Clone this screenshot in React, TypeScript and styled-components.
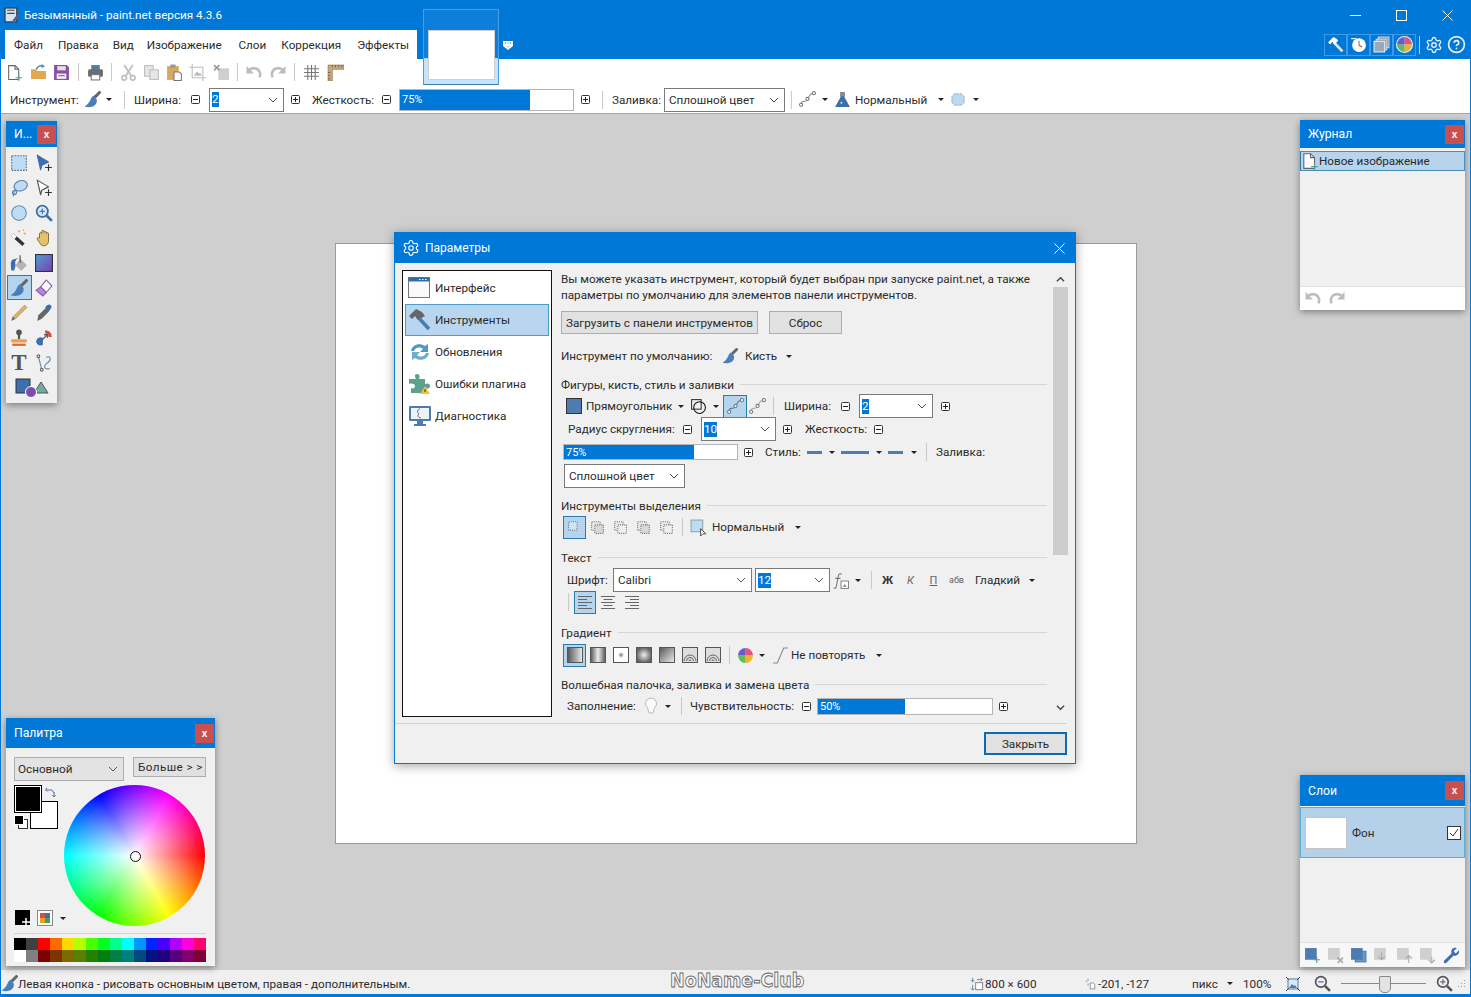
import type { ReactNode } from 'react'
import styled, { createGlobalStyle } from 'styled-components'
import { Settings, CircleHelp } from 'lucide-react'

const BLUE = '#0078d7'
const ICON = '#4f7cb0'
const DIS = '#bdbdbd'

const GlobalStyle = createGlobalStyle`
  html, body { margin: 0; padding: 0; background: #cfcfcf; }
  * { box-sizing: border-box; }
`

const Frame = styled.div`
  position: relative;
  width: 1471px;
  height: 997px;
  display: flex;
  flex-direction: column;
  overflow: hidden;
  border-left: 1px solid ${BLUE};
  border-right: 1px solid ${BLUE};
  border-bottom: 3px solid ${BLUE};
  font: 11.7px Roboto, "Noto Sans", sans-serif;
  color: #2b2b2b;
`

const TitleBar = styled.div`
  height: 30px;
  flex: none;
  display: flex;
  align-items: center;
  padding-left: 3px;
  background: ${BLUE};
  color: #fff;
`

const TitleText = styled.span`
  margin-left: 3px;
`

const WinButtons = styled.div`
  margin-left: auto;
  display: flex;
`

const WinBtn = styled.span`
  width: 46px;
  height: 30px;
  display: flex;
  align-items: center;
  justify-content: center;
`

const MenuRow = styled.div`
  height: 29px;
  flex: none;
  display: flex;
  align-items: stretch;
  padding: 0 2px 0 4px;
  background: ${BLUE};
`

const MenuTab = styled.div`
  width: 412px;
  display: flex;
  align-items: center;
  background: #fff;
  padding: 1px 0 0 9px;
`

const MenuItem = styled.span<{ $w: number }>`
  width: ${(p) => p.$w}px;
  white-space: nowrap;
`

const MenuRight = styled.div`
  margin-left: auto;
  display: flex;
  align-items: center;
`

const RightTool = styled.span<{ $on?: boolean }>`
  width: 23px;
  height: 22px;
  display: flex;
  align-items: center;
  justify-content: center;
  border: 1px solid ${(p) => (p.$on ? '#3c9ae6' : 'transparent')};
`

const IconRow = styled.div`
  height: 26px;
  flex: none;
  display: flex;
  align-items: center;
  padding-left: 1px;
  background: #fff;
`

const ToolRow = styled.div`
  height: 29px;
  flex: none;
  display: flex;
  align-items: center;
  padding: 1px 0 0 9px;
  background: #fff;
  border-bottom: 1px solid #a6a6a6;
`

const Slot = styled.span<{ $w: number; $ml?: number }>`
  width: ${(p) => p.$w}px;
  margin-left: ${(p) => p.$ml ?? 0}px;
  flex: none;
  display: flex;
  align-items: center;
  justify-content: center;
`

const Label = styled.span<{ $w: number; $ml?: number }>`
  width: ${(p) => p.$w}px;
  margin-left: ${(p) => p.$ml ?? 0}px;
  flex: none;
  white-space: nowrap;
`

const Caret = styled.span<{ $w: number }>`
  width: ${(p) => p.$w}px;
  flex: none;
  display: flex;
  justify-content: center;
  &::after {
    content: '';
    border-left: 3px solid transparent;
    border-right: 3px solid transparent;
    border-top: 3px solid #222;
  }
`

const Sep = styled.span<{ $w: number; $ml?: number }>`
  width: ${(p) => p.$w}px;
  height: 18px;
  margin-left: ${(p) => p.$ml ?? 0}px;
  flex: none;
  display: flex;
  justify-content: center;
  &::after {
    content: '';
    width: 1px;
    background: #c9c9c9;
  }
`

const Combo = styled.span<{ $w: number; $h?: number; $ml?: number }>`
  width: ${(p) => p.$w}px;
  height: ${(p) => p.$h ?? 24}px;
  margin-left: ${(p) => p.$ml ?? 0}px;
  flex: none;
  display: flex;
  align-items: center;
  justify-content: space-between;
  padding: 0 5px 0 4px;
  background: #fff;
  border: 1px solid #7a7a7a;
`

const Picked = styled.span`
  background: ${BLUE};
  color: #fff;
  line-height: 15px;
  margin-left: -2px;
`

const Track = styled.span<{ $w: number; $h?: number; $ml?: number }>`
  position: relative;
  width: ${(p) => p.$w}px;
  height: ${(p) => p.$h ?? 22}px;
  margin-left: ${(p) => p.$ml ?? 0}px;
  flex: none;
  display: flex;
  background: #fff;
  border: 1px solid #b5b5b5;
`

const Fill = styled.span`
  background: ${BLUE};
  color: #fff;
  padding-left: 2px;
  font-size: 11px;
  display: flex;
  align-items: center;
`

const Workspace = styled.div`
  position: relative;
  flex: 1;
  display: flex;
  align-items: center;
  justify-content: center;
  padding-top: 2px;
  background: #cfcfcf;
`

const Canvas = styled.div`
  width: 802px;
  height: 601px;
  background: #fff;
  border: 1px solid #9a9a9a;
`

const Thumb = styled.div`
  position: absolute;
  left: 422px;
  top: 9px;
  width: 76px;
  height: 76px;
  padding: 20px 3px 4px 4px;
  background: linear-gradient(rgba(255, 255, 255, 0.05) 65%, rgba(190, 225, 250, 0.9) 65%);
  border: 1px solid #4b9ce0;
  border-bottom-color: #3b7ea8;
`

const ThumbPage = styled.div`
  height: 100%;
  background: #fff;
  border: 1px solid #cfcfcf;
`

const Panel = styled.div<{ $x: number; $y: number; $w: number; $h: number }>`
  position: absolute;
  left: ${(p) => p.$x}px;
  top: ${(p) => p.$y}px;
  width: ${(p) => p.$w}px;
  height: ${(p) => p.$h}px;
  display: flex;
  flex-direction: column;
  background: #f0f0f0;
  box-shadow: 0 2px 7px rgba(0, 0, 0, 0.4);
`

const PanelHead = styled.div<{ $h: number }>`
  height: ${(p) => p.$h}px;
  flex: none;
  display: flex;
  align-items: center;
  justify-content: space-between;
  padding: 0 1px 0 8px;
  background: ${BLUE};
  color: #fff;
  font-size: 12.2px;
`

const CloseX = styled.span`
  width: 19px;
  height: 19px;
  display: flex;
  align-items: center;
  justify-content: center;
  background: #c75050;
  color: #fff;
  font: bold 10px "Liberation Sans", sans-serif;
`

const ToolGrid = styled.div`
  display: grid;
  grid-template-columns: 25px 25px;
  grid-auto-rows: 25px;
  padding: 3px 0 0 0;
  justify-content: center;
`

const ToolCell = styled.span<{ $on?: boolean }>`
  display: flex;
  align-items: center;
  justify-content: center;
  background: ${(p) => (p.$on ? '#b5d4ee' : 'transparent')};
  border: 1px solid ${(p) => (p.$on ? '#2a7ca8' : 'transparent')};
  svg {
    width: 18px;
    height: 18px;
  }
`

const TypeT = styled.span`
  font: bold 23px "Liberation Serif", serif;
  color: #555;
  line-height: 22px;
`

const ShapesCell = styled.span`
  grid-column: 1 / 3;
  display: flex;
  align-items: center;
  justify-content: center;
`

const HistRow = styled.div`
  height: 20px;
  margin-top: 3px;
  display: flex;
  align-items: center;
  background: #b8d4ec;
  border: 1px solid #3f8fb8;
  border-left-color: #2a7ca8;
`

const PanelFill = styled.div`
  flex: 1;
`

const PanelFoot = styled.div<{ $h: number; $bg: string; $pl: number }>`
  height: ${(p) => p.$h}px;
  flex: none;
  display: flex;
  align-items: center;
  padding-left: ${(p) => p.$pl}px;
  background: ${(p) => p.$bg};
  border-top: 1px solid #e2e2e2;
`

const LayerRow = styled.div`
  height: 51px;
  margin-top: 1px;
  display: flex;
  align-items: center;
  padding: 0 3px 0 4px;
  background: #b4d1e9;
  border: 1px solid #56b0d8;
`

const LayerThumb = styled.span`
  width: 42px;
  height: 32px;
  background: #fff;
  border: 1px solid #c5c5c5;
`

const LayerName = styled.span`
  margin-left: 5px;
  flex: 1;
`

const CheckBox = styled.span`
  width: 14px;
  height: 14px;
  display: flex;
  align-items: center;
  justify-content: center;
  background: #fff;
  border: 1px solid #333;
`

const PaletteBody = styled.div`
  flex: 1;
  display: flex;
  flex-direction: column;
  padding: 9px 9px 4px 8px;
`

const PaletteTop = styled.div`
  display: flex;
  align-items: flex-start;
`

const PaletteCombo = styled.span`
  width: 110px;
  height: 24px;
  display: flex;
  align-items: center;
  justify-content: space-between;
  padding: 0 5px 0 3px;
  background: #e3e3e3;
  border: 1px solid #adadad;
`

const MoreBtn = styled.span`
  width: 73px;
  height: 20px;
  margin-left: 9px;
  display: flex;
  align-items: center;
  padding-left: 4px;
  background: #e1e1e1;
  border: 1px solid #adadad;
  letter-spacing: 0.4px;
`

const PaletteMid = styled.div`
  display: flex;
  margin-top: 4px;
`

const SwatchCol = styled.div`
  position: relative;
  width: 50px;
  height: 141px;
`

const MainColor = styled.span<{ $bg: string; $x: number; $y: number }>`
  position: absolute;
  left: ${(p) => p.$x}px;
  top: ${(p) => p.$y}px;
  width: 26px;
  height: 26px;
  background: ${(p) => p.$bg};
  outline: 1px solid #000;
  border: 1px solid #fff;
`

const SwapIcon = styled.span`
  position: absolute;
  left: 31px;
  top: 2px;
`

const ResetIcon = styled.span`
  position: absolute;
  left: 0;
  top: 30px;
`

const PaletteIcons = styled.div`
  position: absolute;
  left: 1px;
  bottom: 0;
  display: flex;
  align-items: center;
`

const Wheel = styled.div`
  position: relative;
  width: 141px;
  height: 141px;
  border-radius: 50%;
  background: radial-gradient(circle, #fff 0, rgba(255, 255, 255, 0) 70%),
    conic-gradient(from 90deg, #f00, #ff0, #0f0, #0ff, #00f, #f0f, #f00);
  &::after {
    content: '';
    position: absolute;
    left: 66px;
    top: 66px;
    width: 9px;
    height: 9px;
    border-radius: 50%;
    border: 1.5px solid #111;
    background: rgba(255, 255, 255, 0.6);
  }
`

const PaletteRule = styled.div`
  height: 1px;
  margin-top: 7px;
  background: #d4d4d4;
`

const Strip = styled.div`
  display: grid;
  grid-template-columns: repeat(16, 12px);
  grid-auto-rows: 12px;
  margin-top: 4px;
`

const StatusBar = styled.div`
  height: 24px;
  flex: none;
  display: flex;
  align-items: center;
  padding-top: 3px;
  background: #f0f0f0;
`

const Watermark = styled.span`
  width: 300px;
  flex: none;
  font: bold 17.5px "DejaVu Sans", sans-serif;
  margin-top: -7px;
  color: #f7f7f7;
  -webkit-text-stroke: 0.8px #666;
  transform: scaleY(1.15);
`

const ZoomTrack = styled.span`
  position: relative;
  width: 85px;
  height: 1px;
  margin-left: 10px;
  flex: none;
  background: #8a8a8a;
  &::after {
    content: '';
    position: absolute;
    left: 38px;
    top: -7px;
    width: 10px;
    height: 15px;
    background: #e3e3e3;
    border: 1px solid #8a8a8a;
    border-radius: 1px 1px 5px 5px;
  }
`

const Dialog = styled.div`
  position: absolute;
  left: 393px;
  top: 118px;
  width: 682px;
  height: 532px;
  display: flex;
  flex-direction: column;
  background: #f0f0f0;
  border: 1px solid ${BLUE};
  box-shadow: 0 2px 10px rgba(0, 0, 0, 0.35);
`

const DialogHead = styled.div`
  height: 30px;
  flex: none;
  display: flex;
  align-items: center;
  padding-left: 7px;
  background: ${BLUE};
  color: #fff;
  gap: 5px;
  font-size: 12px;
`

const DialogClose = styled.span`
  margin-left: auto;
  width: 32px;
  display: flex;
  justify-content: center;
`

const DialogMain = styled.div`
  flex: 1;
  display: flex;
  padding: 7px 7px 0 7px;
`

const SideList = styled.div`
  width: 150px;
  height: 447px;
  flex: none;
  padding: 1px 2px;
  background: #fff;
  border: 1px solid #111;
`

const SideItem = styled.div<{ $on?: boolean }>`
  height: 32px;
  display: flex;
  align-items: center;
  gap: 3px;
  padding: 0 0 1px 2px;
  background: ${(p) => (p.$on ? '#b8d6f0' : 'transparent')};
  border: 1px solid ${(p) => (p.$on ? '#4e9cc4' : 'transparent')};
`

const Content = styled.div`
  width: 486px;
  margin-left: 9px;
  flex: none;
`

const Desc = styled.div`
  line-height: 16px;
  height: 33px;
  padding-top: 1px;
  white-space: nowrap;
`

const Row = styled.div<{ $h: number; $mt?: number }>`
  height: ${(p) => p.$h}px;
  margin-top: ${(p) => p.$mt ?? 0}px;
  display: flex;
  align-items: center;
  white-space: nowrap;
`

const PlainBtn = styled.span<{ $w: number; $ml?: number }>`
  width: ${(p) => p.$w}px;
  height: 23px;
  margin-left: ${(p) => p.$ml ?? 0}px;
  display: flex;
  align-items: center;
  justify-content: center;
  background: #e1e1e1;
  border: 1px solid #adadad;
`

const Section = styled.div<{ $mt: number }>`
  height: 16px;
  margin-top: ${(p) => p.$mt}px;
  display: flex;
  align-items: center;
  gap: 6px;
  white-space: nowrap;
  &::after {
    content: '';
    flex: 1;
    height: 1px;
    margin-top: -2px;
    background: #d6d6d6;
  }
`

const PickBtn = styled.span<{ $w?: number; $ml?: number }>`
  width: ${(p) => p.$w ?? 23}px;
  height: 23px;
  margin-left: ${(p) => p.$ml ?? 0}px;
  flex: none;
  display: flex;
  align-items: center;
  justify-content: center;
  background: #b5d4ee;
  border: 1px solid #2a7ca8;
`

const Dash = styled.span<{ $w: number }>`
  width: ${(p) => p.$w}px;
  height: 3px;
  flex: none;
  background: #4f7cb0;
`

const FontMark = styled.span<{ $b?: boolean; $i?: boolean; $u?: boolean; $small?: boolean }>`
  width: 23px;
  flex: none;
  text-align: center;
  font-size: ${(p) => (p.$small ? 9 : 11)}px;
  font-weight: ${(p) => (p.$b ? 700 : 400)};
  font-style: ${(p) => (p.$i ? 'italic' : 'normal')};
  text-decoration: ${(p) => (p.$u ? 'underline' : 'none')};
  color: ${(p) => (p.$b ? '#333' : '#666')};
`

const ScrollBar = styled.div`
  width: 15px;
  height: 447px;
  margin-left: 6px;
  flex: none;
  display: flex;
  flex-direction: column;
  align-items: center;
  justify-content: space-between;
  padding: 5px 0;
  background: linear-gradient(#f0f0f0 17px, #cdcdcd 17px, #cdcdcd 285px, #f0f0f0 285px);
`

const DialogFoot = styled.div`
  height: 40px;
  margin: 0 8px 0 0;
  flex: none;
  display: flex;
  justify-content: flex-end;
  padding: 8px 0 0;
  border-top: 1px solid #d4d4d4;
`

const CloseBtn = styled.span`
  width: 83px;
  height: 23px;
  display: flex;
  align-items: center;
  justify-content: center;
  background: #e1e1e1;
  border: 2px solid #0a6cb0;
`

// ---- icons ----

function Svg({ s = 17, vb = 16, children }: { s?: number; vb?: number; children: ReactNode }) {
  return (
    <svg width={s} height={s} viewBox={`0 0 ${vb} ${vb}`} fill="none">
      {children}
    </svg>
  )
}

const Box = ({ plus }: { plus?: boolean }) => (
  <Svg s={9} vb={9}>
    <rect x=".5" y=".5" width="8" height="8" rx="1" stroke="#333" fill="#fff" />
    <path d="M2 4.5h5" stroke="#222" />
    {plus && <path d="M4.5 2v5" stroke="#222" />}
  </Svg>
)

const Chev = () => (
  <Svg s={10} vb={10}>
    <path d="M1 3l4 4 4-4" stroke="#555" />
  </Svg>
)

const Brush = ({ s = 17 }: { s?: number }) => (
  <Svg s={s}>
    <path d="M15.500 .5L10 6" stroke="#666" strokeWidth="2.800" />
    <path d="M9 4.500C5.500 6 7 11 .5 14.500c6 2 12.500-.5 11.500-6.500z" fill="#4a7dbb" />
  </Svg>
)

const NewDoc = ({ s = 17 }: { s?: number }) => (
  <Svg s={s}>
    <path d="M2.5 1.5h6l3.5 3.5v9.5h-9.5z" fill="#fff" stroke="#666" />
    <path d="M8.5 1.5v3.5H12" stroke="#666" />
    <path d="M12 10v6M9 13h6" stroke="#5c9c88" />
  </Svg>
)

const Folder = () => (
  <Svg>
    <path d="M1 5h5l1 1.500h8V14H1z" fill="#e0a850" />
    <path d="M6 5c1-3 4-4 6-3" stroke="#3f8fa0" strokeWidth="1.5" />
    <path d="M11 0l3 2-3 2z" fill="#3f8fa0" />
  </Svg>
)

const Floppy = () => (
  <Svg>
    <path d="M1 1h12l2 2v12H1z" fill="#8a4f9e" />
    <rect x="4" y="2" width="8" height="4" fill="#e8dcef" />
    <rect x="3.500" y="9" width="9" height="5" fill="#f2edf5" />
    <path d="M5 11h6" stroke="#8a4f9e" />
  </Svg>
)

const Printer = () => (
  <Svg>
    <rect x="4" y="1" width="8" height="5" fill="#4f7cb0" />
    <rect x="1" y="5" width="14" height="7" rx="1.500" fill="#6d6d6d" />
    <rect x="4" y="10" width="8" height="5" fill="#fff" stroke="#777" />
  </Svg>
)

const Scissors = () => (
  <Svg>
    <path d="M4 1l6.500 10M12 1L5.500 11" stroke={DIS} strokeWidth="1.600" />
    <circle cx="4" cy="13" r="2.200" stroke={DIS} strokeWidth="1.500" />
    <circle cx="12" cy="13" r="2.200" stroke={DIS} strokeWidth="1.500" />
  </Svg>
)

const CopyIco = () => (
  <Svg>
    <rect x="1.500" y="1.500" width="8" height="10" fill="#e6e6e6" stroke={DIS} />
    <rect x="6.500" y="5.500" width="8" height="9" fill="#e6e6e6" stroke={DIS} />
  </Svg>
)

const PasteIco = () => (
  <Svg>
    <rect x="1" y="2" width="11" height="13" fill="#d9a860" />
    <rect x="4" y="0.500" width="5" height="3" fill="#999" />
    <path d="M7.500 7.500h5l2 2v6h-7z" fill="#fff" stroke="#777" />
  </Svg>
)

const CropIco = () => (
  <Svg>
    <path d="M3 0v13h13M0 3h13v13" stroke={DIS} />
    <path d="M5 10l2.500-3 2 2 1-1 1.500 3H5z" fill={DIS} />
  </Svg>
)

const DeselIco = () => (
  <Svg>
    <rect x="5" y="4" width="10" height="11" fill="#cfcfcf" />
    <path d="M1 1l5 5M6 1L1 6" stroke="#999" strokeWidth="1.500" />
  </Svg>
)

const Undo = ({ flip }: { flip?: boolean }) => (
  <svg width="18" height="15" viewBox="0 0 16 14" fill="none" transform={flip ? 'scale(-1,1)' : undefined}>
    <path d="M3 5c3-3 9-3 10.500 2 .5 1.500.3 3-.5 4.500" stroke={DIS} strokeWidth="2.400" />
    <path d="M1 1v7h7z" fill={DIS} />
  </svg>
)

const GridIco = () => (
  <Svg>
    <path d="M4.500 1v14M8 1v14M11.500 1v14M1 4.500h14M1 8h14M1 11.500h14" stroke="#777" />
  </Svg>
)

const Ruler = () => (
  <Svg>
    <path d="M1 1h15v4H5v11H1z" fill="#c9a877" stroke="#8a7350" strokeWidth=".6" />
    <path d="M5 1v2M8 1v2M11 1v2M14 1v2M1 8h2M1 11h2M1 14h2" stroke="#6b5a3e" strokeWidth=".8" />
  </Svg>
)

const Hammer = ({ c = '#6e6e6e', h = '#4f7cb0' }: { c?: string; h?: string }) => (
  <Svg>
    <path d="M6.500 6l8 8.500" stroke={h} strokeWidth="2.600" />
    <path d="M1 6l5-5 3 1.500 1.500 2L7 8 5 5.500 3 8z" fill={c} />
  </Svg>
)

const ClockIco = () => (
  <Svg>
    <circle cx="8.500" cy="8.500" r="6.500" fill="#fff" />
    <path d="M8.500 4.500v4.300l3 1.500" stroke="#777" />
    <path d="M1 2h5v1H1z" fill="#fff" />
  </Svg>
)

const LayersIco = () => (
  <Svg>
    <rect x="5" y="1" width="10" height="10" fill="#7b8ea3" stroke="#d5dde6" />
    <rect x="3" y="3" width="10" height="10" fill="#8b9db0" stroke="#d5dde6" />
    <rect x="1" y="5" width="10" height="10" fill="#9baabb" stroke="#e8edf2" />
  </Svg>
)

const ColorDisc = ({ s = 17 }: { s?: number }) => (
  <svg width={s} height={s} viewBox="-8 -8 16 16">
    <circle r="8" fill="#eee" />
    <path d="M0 0L0-7A7 7 0 0 1 7 0z" fill="#e2557a" />
    <path d="M0 0L7 0A7 7 0 0 1 0 7z" fill="#f0b030" />
    <path d="M0 0L0 7A7 7 0 0 1-7 0z" fill="#66bb55" />
    <path d="M0 0L-7 0A7 7 0 0 1 0-7z" fill="#6a5acd" />
  </svg>
)

const Shield = () => (
  <svg width="10" height="10" viewBox="0 0 10 10">
    <path d="M0 1h10v5L5 10 0 6z" fill="#fff" />
    <path d="M2 3h1M4.500 3h1M7 3h1" stroke={BLUE} />
    <path d="M3 6h4L5 8z" fill="#bcd8f0" />
  </svg>
)

const CurveIco = ({ c = '#7a9cc4' }: { c?: string }) => (
  <Svg>
    <path d="M2 13c0-6 4-1 6-5s3-6 6-6" stroke={c} />
    <circle cx="2" cy="13" r="1.500" fill="#fff" stroke="#777" />
    <circle cx="8" cy="7.500" r="1.500" fill="#fff" stroke="#777" />
    <circle cx="14" cy="2" r="1.500" fill="#fff" stroke="#777" />
  </Svg>
)

const Flask = () => (
  <Svg>
    <path d="M6 1h4v5l5 9H1l5-9z" fill="#3d6fa8" />
    <path d="M6 1h4v4H6z" fill="#8a8a8a" />
    <circle cx="7" cy="11" r="1" fill="#bfe0f5" />
  </Svg>
)

const Blob = () => (
  <Svg>
    <path d="M4 1.500h8l3 3v7l-3 3H4l-3-3v-7z" fill="#bcd9f3" stroke="#8a9fb5" strokeDasharray="2 1" />
  </Svg>
)

const SelRect = () => (
  <Svg>
    <rect x="1.500" y="1.500" width="13" height="13" fill="#bfdcf5" stroke="#5b6f85" strokeDasharray="1.500 1" />
  </Svg>
)

const SelMove = ({ solid }: { solid?: boolean }) => (
  <Svg>
    <path d="M2 1l10 6-6 3-1 4z" fill={solid ? '#3d6fb0' : '#fff'} stroke={solid ? '#3d6fb0' : '#555'} strokeLinejoin="round" />
    <path d="M12 9v6M9 12h6" stroke="#333" />
  </Svg>
)

const Lasso = () => (
  <Svg>
    <ellipse cx="9.500" cy="6" rx="6" ry="4.500" fill="#bfdcf5" stroke="#5b7fa5" transform="rotate(-20 9.500 6)" />
    <circle cx="4" cy="12" r="1.800" stroke="#5b7fa5" />
    <path d="M4 10c-1 2 0 4-1.500 5.500" stroke="#5b7fa5" />
  </Svg>
)

const Ellipse = () => (
  <Svg>
    <circle cx="8" cy="8" r="6.500" fill="#bfdcf5" stroke="#6d8fb0" />
  </Svg>
)

const Zoom = ({ c = '#3d6fa8', fill = '#dbe8f4', plus = true }: { c?: string; fill?: string; plus?: boolean }) => (
  <Svg>
    <circle cx="6.500" cy="6.500" r="5" fill={fill} stroke={c} strokeWidth="1.600" />
    <path d="M10.500 10.500l4.500 4.500" stroke={c} strokeWidth="2.400" />
    <path d="M4 6.500h5" stroke={c} />
    {plus && <path d="M6.500 4v5" stroke={c} />}
  </Svg>
)

const Wand = () => (
  <Svg>
    <path d="M2 5l10 9" stroke="#333" strokeWidth="3" />
    <path d="M2 5l3 2.700" stroke="#fff" strokeWidth="3" />
    <circle cx="8" cy="2" r="1" fill="#e0b050" />
    <circle cx="13" cy="4" r="1" fill="#e0b050" />
    <circle cx="12" cy="1" r=".7" fill="#e0b050" />
  </Svg>
)

const Hand = () => (
  <Svg>
    <path d="M4 8V4c0-1 2-1 2 0V2c0-1 2-1 2 0v1c0-1 2-1 2 0v1c0-1 2-1 2 0v7c0 2-2 4-4 4s-3-1-4-3L2 9c-.5-1 1-2 2-1z" fill="#e7c16b" stroke="#7a6330" strokeWidth=".8" />
  </Svg>
)

const Bucket = () => (
  <Svg>
    <path d="M9 4l6 6-5 5-5-5z" fill="#b5b5b5" />
    <path d="M9 1v7" stroke="#555" />
    <path d="M5 10C3 4 9 3 9 3L2 5c-2 2-1 6-1 9 0 1 3 1 3 0z" fill="#3d6fb0" />
  </Svg>
)

const GradBox = () => (
  <svg width="16" height="16" viewBox="0 0 16 16">
    <defs>
      <linearGradient id="tg" x1="0" y1="0" x2="1" y2="1">
        <stop offset="0" stopColor="#4fa0d8" />
        <stop offset="1" stopColor="#7a3fb0" />
      </linearGradient>
    </defs>
    <rect x=".5" y=".5" width="15" height="15" fill="url(#tg)" stroke="#333" />
  </svg>
)

const Eraser = () => (
  <Svg>
    <path d="M10 1l5 5-5 6-5-5z" fill="#fff" stroke="#8a5fb0" />
    <path d="M5 7l5 5-3 3-6-5z" fill="#b987d8" stroke="#8a5fb0" />
  </Svg>
)

const Pencil = () => (
  <Svg>
    <path d="M13 1l2 2L5 13l-3 1 1-3z" fill="#e0b468" stroke="#a8843f" strokeWidth=".6" />
    <path d="M1 15l1.500-4 2 2z" fill="#666" />
  </Svg>
)

const Picker = () => (
  <Svg>
    <path d="M10 3l3 3-7 7-4 2 1-5z" fill="#666" />
    <path d="M9 3c2-3 4-3 5-2s1 3-2 5z" fill="#3d6fb0" />
  </Svg>
)

const Stamp = () => (
  <Svg>
    <circle cx="8" cy="3" r="2.500" fill="#555" />
    <path d="M7 5h2v4H7z" fill="#555" />
    <rect x="1" y="9" width="14" height="3" rx="1" fill="#e8a048" />
    <rect x="2" y="13" width="12" height="2" fill="#d06a3a" />
  </Svg>
)

const Recolor = () => (
  <Svg>
    <path d="M1 11a4 4 0 0 1 6-3v6a4 4 0 0 1-6-3z" fill="#3d6fb0" />
    <path d="M9 1a6 6 0 0 1 6 6h-3a3 3 0 0 0-3-3z" fill="#d0503a" />
    <path d="M6 10l5-5M8 5h3v3" stroke="#555" />
  </Svg>
)

const LineTool = () => (
  <Svg>
    <path d="M3 2l3 12M10 3c4-2 5 2 1 5s-3 6 2 5" stroke="#6d8fb0" />
    <circle cx="3" cy="2" r="1.200" stroke="#666" fill="#fff" />
    <circle cx="6" cy="14" r="1.200" stroke="#666" fill="#fff" />
  </Svg>
)

const Shapes = () => (
  <svg width="34" height="20" viewBox="0 0 34 20">
    <rect x="1" y="1" width="14" height="14" fill="#3d6fb0" stroke="#333" />
    <path d="M26 4l7 11H19z" fill="#6fae9c" stroke="#555" />
    <circle cx="16" cy="14" r="5.500" fill="#7a4fb0" stroke="#fff" />
  </svg>
)

const RectMode = ({ n }: { n: number }) => (
  <Svg>
    <rect x="2.500" y="2.500" width="8" height="8" fill={n === 0 ? '#cfe4f7' : '#e8e8e8'} stroke="#777" strokeDasharray="1 1" />
    {n > 0 && <rect x="5.500" y="5.500" width="8" height="8" fill={n % 2 ? '#d8d8d8' : '#f0f0f0'} stroke="#777" strokeDasharray="1 1" />}
  </Svg>
)

const SelMode = () => (
  <Svg>
    <rect x="1" y="1" width="11" height="11" fill="#bfdcf5" stroke="#8aa" />
    <path d="M10 9v7l2-2 3 0z" fill="#fff" stroke="#333" strokeWidth=".8" />
  </Svg>
)

const Align = ({ kind }: { kind: 'l' | 'c' | 'r' }) => {
  const long = 'M1 2.500h14M1 8.500h14M1 14.500h14'
  const short = kind === 'l' ? 'M1 5.500h9M1 11.500h9' : kind === 'c' ? 'M3.500 5.500h9M3.500 11.500h9' : 'M6 5.500h9M6 11.500h9'
  return (
    <Svg s={16}>
      <path d={long} stroke="#666" />
      <path d={short} stroke="#666" />
    </Svg>
  )
}

const FontFx = () => (
  <Svg>
    <path d="M9 2C6 1 6 3 5.500 6L4 14c-.3 1.500-1.500 1.500-2.500 1M3 6h5" stroke="#777" />
    <rect x="8.500" y="8.500" width="7" height="7" stroke="#888" fill="#fff" />
    <path d="M10 14l2-3 2 3z" fill="#999" />
  </Svg>
)

const GradMode = ({ k }: { k: number }) => {
  const bgs = ['#999', '#bbb', '#fff', '#aaa', '#888', '#ddd', '#ddd']
  return (
    <svg width="16" height="16" viewBox="0 0 16 16">
      <defs>
        <linearGradient id={`g${k}`} x1="0" x2="1" y1="0" y2={k === 4 ? '1' : '0'}>
          <stop offset="0" stopColor="#555" />
          <stop offset={k === 1 ? '.5' : '1'} stopColor="#eee" />
          {k === 1 && <stop offset="1" stopColor="#555" />}
        </linearGradient>
        <radialGradient id={`r${k}`}>
          <stop offset="0" stopColor={k === 2 ? '#777' : '#eee'} />
          <stop offset={k === 2 ? '.4' : '1'} stopColor={k === 2 ? '#fff' : '#666'} />
        </radialGradient>
      </defs>
      <rect x=".5" y=".5" width="15" height="15" fill={k < 2 || k === 4 ? `url(#g${k})` : k < 4 ? `url(#r${k})` : bgs[k]} stroke="#555" />
      {k > 4 && <path d="M2 14a6 6 0 0 1 12 0M4.500 14a3.500 3.500 0 0 1 7 0M7 14a1 1 0 0 1 2 0" stroke="#666" fill="none" />}
    </svg>
  )
}

const Bulb = () => (
  <svg width="14" height="18" viewBox="0 0 14 18" fill="none">
    <path d="M7 1a5.500 5.500 0 0 1 3.500 9.800L9 16H5L3.500 10.800A5.500 5.500 0 0 1 7 1z" stroke="#bbb" fill="#fafafa" />
  </svg>
)

const WinIcon = () => (
  <Svg>
    <rect x="1" y="1" width="11" height="13" fill="#d8e4f0" stroke="#333" />
    <path d="M3 3h7M3 6h7" stroke="#444" />
    <path d="M7 14l6-8 2 2-6 7z" fill="#4f5f90" />
  </Svg>
)

const SideWindow = () => (
  <Svg s={24} vb={24}>
    <rect x=".5" y="1.500" width="21" height="20" fill="#fafafa" stroke="#777" />
    <rect x=".5" y="1.500" width="21" height="4" fill="#2f6fa8" />
    <path d="M14 3.500h1.500M17 3.500h1.500M11 3.500h1.500" stroke="#fff" />
  </Svg>
)

const SideHammer = () => (
  <Svg s={24} vb={24}>
    <path d="M9 8l12 13" stroke="#4f7cb0" strokeWidth="3.600" />
    <path d="M1 8l7-7 6 3 3 4-7 4-3-4-3 3z" fill="#666" />
  </Svg>
)

const SideUpdate = () => (
  <Svg s={24} vb={24}>
    <path d="M3 11C4 5 11 2 17 6l3-2v8h-8l3-3C11 6 7 8 6 11z" fill="#4f9ac0" />
    <path d="M21 13c-1 6-8 9-14 5l-3 2v-8h8l-3 3c4 3 8 1 9-2z" fill="#6faec8" />
  </Svg>
)

const SidePuzzle = () => (
  <Svg s={24} vb={24}>
    <path d="M9 2c3 0 3 3 2 5h6v5c2-1 5-1 5 2s-3 3-5 2v5H3v-5c2 1 4 0 4-2s-3-3-6-2V7h7C7 5 6 2 9 2z" fill="#5f9f8f" />
    <path d="M17 14l5 8H12z" fill="#f0c040" />
    <path d="M17 17v3" stroke="#333" />
  </Svg>
)

const SideDiag = () => (
  <Svg s={24} vb={24}>
    <rect x="1" y="2" width="22" height="15" rx="1" fill="#4f7cb0" />
    <rect x="3" y="4" width="18" height="11" fill="#eef3f8" />
    <path d="M12 5c-3 0-3 4-1 5-2 1-1 4 2 4" stroke="#667" />
    <path d="M9 17h6v3H9zM6 20h12v2H6z" fill="#4f7cb0" />
  </Svg>
)

const LayerBtn = ({ k }: { k: number }) => {
  const on = k === 0 || k === 2
  const c = on ? ICON : '#cfcfcf'
  return (
    <Svg>
      {k === 2 && <rect x="5" y="4" width="10" height="10" fill="#6d97c4" stroke={ICON} />}
      <rect x="1" y="1" width="11" height="11" fill={c} />
      {k === 0 && <path d="M12 9v6M9 12h6" stroke="#5c9c88" />}
      {k === 1 && <path d="M10 10l5 5M15 10l-5 5" stroke="#aaa" strokeWidth="1.500" />}
      {k === 3 && <path d="M8 5v7M5 9l3 3 3-3" stroke="#aaa" />}
      {k === 4 && <path d="M12 15V9M9 11l3-3 3 3" stroke="#aaa" />}
      {k === 5 && <path d="M12 9v6M9 12l3 3 3-3" stroke="#aaa" />}
    </Svg>
  )
}

const Wrench = () => (
  <Svg>
    <path d="M15 3l-3 3-2-2 3-3c-3-1-6 1-5 5L1 13c-1 2 1 3 2 2l7-7c3 1 6-2 5-5z" fill="#3d6fb0" />
  </Svg>
)

const SizeIco = () => (
  <Svg s={16}>
    <rect x="6.500" y="6.500" width="8" height="8" stroke="#777" fill="#fff" />
    <path d="M3 1v5M1 3.500l2 2 2-2M3 9v6M1 13l2 2 2-2M8 3h6M12 1l2 2-2 2" stroke="#5a7ea6" />
  </Svg>
)

const CursorIco = () => (
  <Svg s={16}>
    <path d="M7 6.500h4l2 2v6H7z" stroke="#777" fill="#fff" />
    <path d="M4 1v3M4 7v3M1 4.500h2" stroke="#5a7ea6" />
  </Svg>
)

const FitIco = () => (
  <Svg s={16}>
    <rect x="3" y="3" width="10" height="10" fill="#dce8f4" stroke="#4f7cb0" />
    <path d="M4 12l3-4 2 2 1-1 2 3z" fill="#4f7cb0" />
    <path d="M1 1l3 3M15 1l-3 3M1 15l3-3M15 15l-3-3" stroke="#345" />
  </Svg>
)

const Grip = () => (
  <svg width="10" height="10" viewBox="0 0 10 10">
    <path d="M8 1h1v1H8zM5 4h1v1H5zM8 4h1v1H8zM2 7h1v1H2zM5 7h1v1H5zM8 7h1v1H8z" fill="#9a9a9a" />
  </svg>
)

const MENU: [string, number][] = [
  ['Файл', 44],
  ['Правка', 55],
  ['Вид', 34],
  ['Изображение', 92],
  ['Слои', 43],
  ['Коррекция', 76],
  ['Эффекты', 60],
]

const TOP = '#000000,#404040,#ff0000,#ff6a00,#ffd800,#b6ff00,#4cff00,#00ff21,#00ff90,#00ffff,#0094ff,#0026ff,#4800ff,#b200ff,#ff00dc,#ff006e'
const BOTTOM = '#ffffff,#808080,#7f0000,#7f3300,#7f6a00,#5b7f00,#267f00,#007f0e,#007f46,#007f7f,#004a7f,#00137f,#21007f,#57007f,#7f006e,#7f0037'
const SWATCHES = [...TOP.split(','), ...BOTTOM.split(',')]

function Panels() {
  return (
    <>
      <Panel $x={5} $y={7} $w={51} $h={282}>
        <PanelHead $h={26}>
          <span>И...</span>
          <CloseX>x</CloseX>
        </PanelHead>
        <ToolGrid>
          <ToolCell><SelRect /></ToolCell>
          <ToolCell><SelMove solid /></ToolCell>
          <ToolCell><Lasso /></ToolCell>
          <ToolCell><SelMove /></ToolCell>
          <ToolCell><Ellipse /></ToolCell>
          <ToolCell><Zoom /></ToolCell>
          <ToolCell><Wand /></ToolCell>
          <ToolCell><Hand /></ToolCell>
          <ToolCell><Bucket /></ToolCell>
          <ToolCell><GradBox /></ToolCell>
          <ToolCell $on><Brush /></ToolCell>
          <ToolCell><Eraser /></ToolCell>
          <ToolCell><Pencil /></ToolCell>
          <ToolCell><Picker /></ToolCell>
          <ToolCell><Stamp /></ToolCell>
          <ToolCell><Recolor /></ToolCell>
          <ToolCell><TypeT>T</TypeT></ToolCell>
          <ToolCell><LineTool /></ToolCell>
          <ShapesCell><Shapes /></ShapesCell>
        </ToolGrid>
      </Panel>

      <Panel $x={5} $y={604} $w={209} $h={248}>
        <PanelHead $h={30}>
          <span>Палитра</span>
          <CloseX>x</CloseX>
        </PanelHead>
        <PaletteBody>
          <PaletteTop>
            <PaletteCombo>
              Основной
              <Chev />
            </PaletteCombo>
            <MoreBtn>Больше &gt; &gt;</MoreBtn>
          </PaletteTop>
          <PaletteMid>
            <SwatchCol>
              <MainColor $bg="#fff" $x={17} $y={17} />
              <MainColor $bg="#000" $x={1} $y={1} />
              <SwapIcon>
                <svg width="11" height="11" viewBox="0 0 11 11" fill="none">
                  <path d="M1 3h6l2 3M2 1L0.500 3 2 4.500M9 9V5M7.500 8L9 10l1.500-2" stroke="#5a6fa8" />
                </svg>
              </SwapIcon>
              <ResetIcon>
                <svg width="15" height="15" viewBox="0 0 15 15">
                  <rect x="4.500" y="4.500" width="9" height="9" fill="#fff" stroke="#333" />
                  <rect x=".5" y=".5" width="9" height="9" fill="#000" stroke="#fff" />
                </svg>
              </ResetIcon>
              <PaletteIcons>
                <svg width="16" height="16" viewBox="0 0 16 16">
                  <rect width="15" height="15" fill="#000" />
                  <path d="M11 8v8M7 12h8" stroke="#fff" strokeWidth="1.500" />
                </svg>
                <Slot $w={16} $ml={6}>
                  <svg width="16" height="16" viewBox="0 0 16 16">
                    <rect x=".5" y=".5" width="15" height="15" fill="#fff" stroke="#888" />
                    <rect x="3" y="3" width="5" height="5" fill="#d8503a" />
                    <rect x="8" y="3" width="5" height="5" fill="#3d6fb0" />
                    <rect x="3" y="8" width="5" height="5" fill="#e8a030" />
                    <rect x="8" y="8" width="5" height="5" fill="#4f9a5a" />
                  </svg>
                </Slot>
                <Caret $w={20} />
              </PaletteIcons>
            </SwatchCol>
            <Wheel />
          </PaletteMid>
          <PaletteRule />
          <Strip>
            {SWATCHES.map((c, i) => (
              <span key={i} style={{ background: c }} />
            ))}
          </Strip>
        </PaletteBody>
      </Panel>

      <Panel $x={1299} $y={6} $w={165} $h={190}>
        <PanelHead $h={28}>
          <span>Журнал</span>
          <CloseX>x</CloseX>
        </PanelHead>
        <HistRow>
          <NewDoc s={18} />
          Новое изображение
        </HistRow>
        <PanelFill />
        <PanelFoot $h={24} $bg="#fff" $pl={1}>
          <Slot $w={24}><Undo /></Slot>
          <Slot $w={24}><Undo flip /></Slot>
        </PanelFoot>
      </Panel>

      <Panel $x={1299} $y={661} $w={165} $h={192}>
        <PanelHead $h={31}>
          <span>Слои</span>
          <CloseX>x</CloseX>
        </PanelHead>
        <LayerRow>
          <LayerThumb />
          <LayerName>Фон</LayerName>
          <CheckBox>
            <svg width="10" height="10" viewBox="0 0 10 10" fill="none">
              <path d="M1 5l3 3 5-7" stroke="#333" />
            </svg>
          </CheckBox>
        </LayerRow>
        <PanelFill />
        <PanelFoot $h={25} $bg="#f7f7f7" $pl={1}>
          {[0, 1, 2, 3, 4, 5].map((k) => (
            <Slot $w={23} key={k}><LayerBtn k={k} /></Slot>
          ))}
          <Slot $w={24}><Wrench /></Slot>
        </PanelFoot>
      </Panel>
    </>
  )
}

function OptionsDialog() {
  return (
    <Dialog>
      <DialogHead>
        <Settings size={18} strokeWidth={1.5} />
        Параметры
        <DialogClose>
          <svg width="11" height="11" viewBox="0 0 11 11" fill="none">
            <path d="M.5.5l10 10M10.500.5l-10 10" stroke="#fff" />
          </svg>
        </DialogClose>
      </DialogHead>
      <DialogMain>
        <SideList>
          <SideItem><SideWindow />Интерфейс</SideItem>
          <SideItem $on><SideHammer />Инструменты</SideItem>
          <SideItem><SideUpdate />Обновления</SideItem>
          <SideItem><SidePuzzle />Ошибки плагина</SideItem>
          <SideItem><SideDiag />Диагностика</SideItem>
        </SideList>
        <Content>
          <Desc>
            Вы можете указать инструмент, который будет выбран при запуске paint.net, а также
            <br />
            параметры по умолчанию для элементов панели инструментов.
          </Desc>
          <Row $h={23} $mt={8}>
            <PlainBtn $w={197}>Загрузить с панели инструментов</PlainBtn>
            <PlainBtn $w={73} $ml={11}>Сброс</PlainBtn>
          </Row>
          <Row $h={24} $mt={10}>
            <Label $w={154}>Инструмент по умолчанию:</Label>
            <Slot $w={30}><Brush s={16} /></Slot>
            <Label $w={40}>Кисть</Label>
            <Caret $w={8} />
          </Row>
          <Section $mt={9}>Фигуры, кисть, стиль и заливки</Section>
          <Row $h={24} $mt={1}>
            <Slot $w={25}>
              <svg width="16" height="16" viewBox="0 0 16 16">
                <rect x=".5" y=".5" width="15" height="15" fill="#4f7cb0" stroke="#333" />
              </svg>
            </Slot>
            <Label $w={88}>Прямоугольник</Label>
            <Caret $w={14} />
            <Slot $w={20}>
              <Svg>
                <rect x="1.500" y="1.500" width="9" height="9" stroke="#333" />
                <circle cx="9" cy="9" r="5.500" stroke="#111" />
              </Svg>
            </Slot>
            <Caret $w={15} />
            <PickBtn $w={24}><CurveIco c="#4f7cb0" /></PickBtn>
            <Slot $w={20}><CurveIco c="#aaa" /></Slot>
            <Sep $w={12} />
            <Label $w={50} $ml={5}>Ширина:</Label>
            <Slot $w={22}><Box /></Slot>
            <Combo $w={74} $ml={3}><Picked>2</Picked><Chev /></Combo>
            <Slot $w={24}><Box plus /></Slot>
          </Row>
          <Row $h={22}>
            <Label $w={106} $ml={7}>Радиус скругления:</Label>
            <Slot $w={27}><Box /></Slot>
            <Combo $w={75}><Picked>10</Picked><Chev /></Combo>
            <Slot $w={22}><Box plus /></Slot>
            <Label $w={62} $ml={7}>Жесткость:</Label>
            <Slot $w={22}><Box /></Slot>
          </Row>
          <Row $h={22} $mt={1}>
            <Track $w={175} $h={16} $ml={2}><Fill style={{ width: '75%' }}>75%</Fill></Track>
            <Slot $w={20}><Box plus /></Slot>
            <Label $w={42} $ml={7}>Стиль:</Label>
            <Dash $w={15} />
            <Caret $w={19} />
            <Dash $w={28} />
            <Caret $w={19} />
            <Dash $w={15} />
            <Caret $w={21} />
            <Sep $w={4} />
            <Label $w={48} $ml={8}>Заливка:</Label>
          </Row>
          <Row $h={24} $mt={1}>
            <Combo $w={121} $ml={3}>Сплошной цвет<Chev /></Combo>
          </Row>
          <Section $mt={10}>Инструменты выделения</Section>
          <Row $h={24} $mt={1}>
            <PickBtn $ml={2}><RectMode n={0} /></PickBtn>
            {[1, 2, 3, 4].map((n) => (
              <Slot $w={23} key={n}><RectMode n={n} /></Slot>
            ))}
            <Sep $w={8} />
            <Slot $w={24}><SelMode /></Slot>
            <Label $w={79} $ml={2}>Нормальный</Label>
            <Caret $w={14} />
          </Row>
          <Section $mt={11}>Текст</Section>
          <Row $h={24} $mt={2}>
            <Label $w={46} $ml={6}>Шрифт:</Label>
            <Combo $w={139}>Calibri<Chev /></Combo>
            <Combo $w={75} $ml={3}><Picked>12</Picked><Chev /></Combo>
            <Slot $w={20}><FontFx /></Slot>
            <Caret $w={16} />
            <Sep $w={10} />
            <FontMark $b>Ж</FontMark>
            <FontMark $i>К</FontMark>
            <FontMark $u>П</FontMark>
            <FontMark $small>абв</FontMark>
            <Label $w={52} $ml={7}>Гладкий</Label>
            <Caret $w={10} />
          </Row>
          <Row $h={20}>
            <Sep $w={11} $ml={2} />
            <PickBtn $w={22}><Align kind="l" /></PickBtn>
            <Slot $w={24}><Align kind="c" /></Slot>
            <Slot $w={23}><Align kind="r" /></Slot>
          </Row>
          <Section $mt={13}>Градиент</Section>
          <Row $h={24} $mt={2}>
            <PickBtn $ml={2}><GradMode k={0} /></PickBtn>
            {[1, 2, 3, 4, 5, 6].map((k) => (
              <Slot $w={23} key={k}><GradMode k={k} /></Slot>
            ))}
            <Sep $w={11} />
            <Slot $w={20}><ColorDisc /></Slot>
            <Caret $w={14} />
            <Slot $w={22}>
              <Svg>
                <path d="M1 15h4l6-14h4" stroke="#888" />
              </Svg>
            </Slot>
            <Label $w={80}>Не повторять</Label>
            <Caret $w={16} />
          </Row>
          <Section $mt={10}>Волшебная палочка, заливка и замена цвета</Section>
          <Row $h={24} $mt={1}>
            <Label $w={74} $ml={6}>Заполнение:</Label>
            <Slot $w={20}><Bulb /></Slot>
            <Caret $w={14} />
            <Sep $w={12} />
            <Label $w={105} $ml={3}>Чувствительность:</Label>
            <Slot $w={22}><Box /></Slot>
            <Track $w={176} $h={17}><Fill style={{ width: '50%' }}>50%</Fill></Track>
            <Slot $w={21}><Box plus /></Slot>
          </Row>
        </Content>
        <ScrollBar>
          <Svg s={9} vb={10}><path d="M1 7l4-4 4 4" stroke="#444" strokeWidth="1.500" /></Svg>
          <Svg s={9} vb={10}><path d="M1 3l4 4 4-4" stroke="#444" strokeWidth="1.500" /></Svg>
        </ScrollBar>
      </DialogMain>
      <DialogFoot>
        <CloseBtn>Закрыть</CloseBtn>
      </DialogFoot>
    </Dialog>
  )
}

export default function App() {
  return (
    <>
      <GlobalStyle />
      <Frame>
        <TitleBar>
          <WinIcon />
          <TitleText>Безымянный - paint.net версия 4.3.6</TitleText>
          <WinButtons>
            <WinBtn>
              <svg width="11" height="1"><rect width="11" height="1" fill="#fff" /></svg>
            </WinBtn>
            <WinBtn>
              <svg width="11" height="11" viewBox="0 0 11 11" fill="none"><rect x=".5" y=".5" width="10" height="10" stroke="#fff" /></svg>
            </WinBtn>
            <WinBtn>
              <svg width="11" height="11" viewBox="0 0 11 11" fill="none"><path d="M.5.5l10 10M10.500.5l-10 10" stroke="#fff" /></svg>
            </WinBtn>
          </WinButtons>
        </TitleBar>
        <MenuRow>
          <MenuTab>
            {MENU.map(([m, w]) => (
              <MenuItem $w={w} key={m}>{m}</MenuItem>
            ))}
          </MenuTab>
          <Slot $w={12} $ml={85}><Shield /></Slot>
          <MenuRight>
            <RightTool $on><Hammer c="#fff" h="#dfe8f0" /></RightTool>
            <RightTool $on><ClockIco /></RightTool>
            <RightTool $on><LayersIco /></RightTool>
            <RightTool $on><ColorDisc /></RightTool>
            <Sep $w={6} />
            <RightTool><Settings size={18} color="#e4eef8" strokeWidth={1.8} /></RightTool>
            <RightTool><CircleHelp size={19} color="#e4eef8" strokeWidth={2.2} /></RightTool>
          </MenuRight>
        </MenuRow>
        <IconRow>
          <Slot $w={24}><NewDoc /></Slot>
          <Slot $w={24}><Folder /></Slot>
          <Slot $w={23}><Floppy /></Slot>
          <Sep $w={10} />
          <Slot $w={24}><Printer /></Slot>
          <Sep $w={9} />
          <Slot $w={24}><Scissors /></Slot>
          <Slot $w={23}><CopyIco /></Slot>
          <Slot $w={23}><PasteIco /></Slot>
          <Slot $w={23}><CropIco /></Slot>
          <Slot $w={24}><DeselIco /></Slot>
          <Sep $w={9} />
          <Slot $w={24}><Undo /></Slot>
          <Slot $w={24}><Undo flip /></Slot>
          <Sep $w={9} />
          <Slot $w={24}><GridIco /></Slot>
          <Slot $w={24}><Ruler /></Slot>
        </IconRow>
        <ToolRow>
          <Label $w={70}>Инструмент:</Label>
          <Slot $w={24}><Brush /></Slot>
          <Caret $w={10} />
          <Sep $w={20} />
          <Label $w={50}>Ширина:</Label>
          <Slot $w={22}><Box /></Slot>
          <Combo $w={75} $ml={3}><Picked>2</Picked><Chev /></Combo>
          <Slot $w={22}><Box plus /></Slot>
          <Label $w={62} $ml={6}>Жесткость:</Label>
          <Slot $w={24}><Box /></Slot>
          <Track $w={175} $ml={1}><Fill style={{ width: '75%' }}>75%</Fill></Track>
          <Slot $w={22}><Box plus /></Slot>
          <Sep $w={12} />
          <Label $w={52} $ml={4}>Заливка:</Label>
          <Combo $w={121}>Сплошной цвет<Chev /></Combo>
          <Sep $w={12} />
          <Slot $w={20}><CurveIco /></Slot>
          <Caret $w={16} />
          <Slot $w={18}><Flask /></Slot>
          <Label $w={76} $ml={4}>Нормальный</Label>
          <Caret $w={20} />
          <Slot $w={14}><Blob /></Slot>
          <Caret $w={22} />
        </ToolRow>
        <Workspace>
          <Canvas />
          <Panels />
          <OptionsDialog />
        </Workspace>
        <StatusBar>
          <Slot $w={17}><Brush /></Slot>
          <Label $w={652}>Левая кнопка - рисовать основным цветом, правая - дополнительным.</Label>
          <Watermark>NoName-Club</Watermark>
          <Slot $w={14}><SizeIco /></Slot>
          <Label $w={100} $ml={1}>800 × 600</Label>
          <Slot $w={12}><CursorIco /></Slot>
          <Label $w={94} $ml={1}>-201, -127</Label>
          <Label $w={32}>пикс</Label>
          <Caret $w={12} />
          <Label $w={40} $ml={7}>100%</Label>
          <Slot $w={20}><FitIco /></Slot>
          <Slot $w={18} $ml={10}><Zoom c="#555" fill="#eef" plus={false} /></Slot>
          <ZoomTrack />
          <Slot $w={18} $ml={9}><Zoom c="#555" fill="#eef" /></Slot>
          <Slot $w={16}><Grip /></Slot>
        </StatusBar>
        <Thumb>
          <ThumbPage />
        </Thumb>
      </Frame>
    </>
  )
}
